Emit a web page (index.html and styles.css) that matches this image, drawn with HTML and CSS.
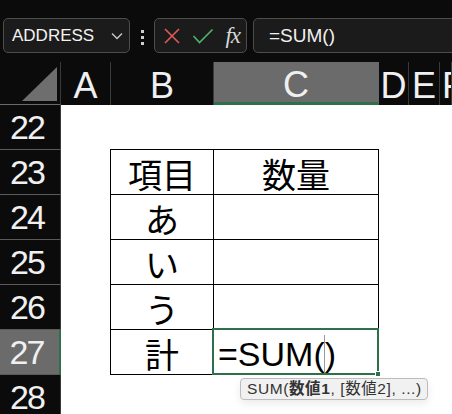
FILE: index.html
```html
<!DOCTYPE html>
<html lang="ja">
<head>
    <meta charset="UTF-8">
    <meta name="viewport" content="width=device-width, initial-scale=1.0">
    <title>sheet</title>
    <link rel="stylesheet" href="styles.css">
</head>
<body>
    <div class="app">
        <div class="toolbar">
            <div class="namebox">
                <span>ADDRESS</span>
                <svg class="chev" width="12" height="8" viewBox="0 0 12 8"><path d="M1 1.5l5 5 5-5" fill="none" stroke="#ccc" stroke-width="1.3"/></svg>
            </div>
            <div class="grip"><i></i><i></i><i></i></div>
            <div class="fbtns">
                <svg width="18" height="18" viewBox="0 0 18 18"><path d="M2 2l14 14M16 2L2 16" stroke="#e05a5a" stroke-width="1.6" fill="none"/></svg>
                <svg width="22" height="16" viewBox="0 0 22 16"><path d="M1.5 8l6 6.5L20.5 1.5" stroke="#4db36a" stroke-width="1.6" fill="none"/></svg>
                <span class="fx">fx</span>
            </div>
            <div class="formula">=SUM()</div>
        </div>

        <div class="sheet">
            <div class="corner"><span></span></div>
            <div class="colhead">A</div>
            <div class="colhead">B</div>
            <div class="colhead sel">C</div>
            <div class="colhead">D</div>
            <div class="colhead">E</div>
            <div class="colhead last">F</div>

            <div class="rowhead r22">22</div>
            <div class="rowhead r23">23</div>
            <div class="rowhead r24">24</div>
            <div class="rowhead r25">25</div>
            <div class="rowhead r26">26</div>
            <div class="rowhead r27 sel">27</div>
            <div class="rowhead r28">28</div>

            <div class="cells"></div>

            <div class="tbl">
                <div class="c">項目</div><div class="c">数量</div>
                <div class="c">あ</div><div class="c"></div>
                <div class="c">い</div><div class="c"></div>
                <div class="c">う</div><div class="c"></div>
                <div class="c">計</div><div class="c active">=SUM(<span class="caret"></span>)<i class="handle"></i></div>
            </div>

            <div class="tip">SUM(<b>数値1</b>, [数値2], ...)</div>
        </div>
    </div>
</body>
</html>
```

FILE: styles.css
```css
*{margin:0;padding:0;box-sizing:border-box;}
body{background:#0b0b0b;font-family:"Liberation Sans","Noto Sans CJK JP",sans-serif;overflow:hidden;}
.app{width:452px;height:414px;overflow:hidden;}

/* top bar */
.toolbar{display:flex;align-items:flex-start;height:62px;padding:18px 0 0 3px;}
.namebox{display:flex;align-items:center;justify-content:space-between;width:127px;height:35px;padding:1px 6px 0 8px;border:1px solid #4d4d4d;border-radius:5px;background:#1b1b1b;color:#f2f2f2;font-size:17px;}
.grip{display:flex;flex-direction:column;gap:3px;margin:12px 10px 0 11px;}
.grip i{display:block;width:3px;height:3px;background:#cfcfcf;}
.fbtns{display:flex;align-items:center;width:93px;height:35px;padding:0 6px 0 8px;border:1px solid #4d4d4d;border-radius:5px;background:#1b1b1b;}
.fbtns svg:nth-child(2){margin-left:11px;}
.fx{margin-left:auto;color:#d8d8d8;font-family:"Liberation Serif",serif;font-style:italic;font-size:23px;letter-spacing:-1px;}
.formula{flex:1;height:35px;margin-left:6px;margin-right:-10px;padding-left:15px;line-height:33px;border:1px solid #4d4d4d;border-radius:5px;background:#1b1b1b;color:#f0f0f0;font-size:19px;}

/* sheet grid */
.sheet{position:relative;display:grid;grid-template-columns:61px 50px 103px 165px 30px 31px 1fr;grid-template-rows:43px repeat(7,45px);}
.corner{grid-column:1;grid-row:1;position:relative;border-right:1px solid #3a3a3a;border-bottom:1px solid #6a6a6a;}
.corner span{position:absolute;left:22px;top:5px;width:35px;height:34px;background:#6e6e6e;clip-path:polygon(100% 0,100% 100%,0 100%);}
.colhead{grid-row:1;display:flex;justify-content:center;align-items:center;padding-top:4px;border-right:1px solid #3a3a3a;color:#f0f0f0;font-size:36px;overflow:hidden;}
.colhead.last{justify-content:flex-start;padding-left:2px;}
.colhead.sel{background:#6b6b6b;border-bottom:3px solid #2e7049;border-right-color:#6b6b6b;padding-top:6px;}
.rowhead{grid-column:1;display:flex;justify-content:center;align-items:center;padding-right:6px;border-bottom:1px solid #5a5a5a;border-right:1px solid #3a3a3a;color:#f0f0f0;font-size:34px;letter-spacing:-2px;}
.rowhead.sel{background:#6b6b6b;border-right:2px solid #2e7049;}
.r22{grid-row:2;}.r23{grid-row:3;}.r24{grid-row:4;}.r25{grid-row:5;}.r26{grid-row:6;}.r27{grid-row:7;}.r28{grid-row:8;}
.cells{grid-column:2/-1;grid-row:2/-1;background:#fff;}

/* bordered range B23:C27 */
.tbl{grid-column:3/5;grid-row:3/8;align-self:start;display:grid;grid-template-columns:103px 165px;grid-template-rows:repeat(5,45px);margin-top:-1px;border-top:1px solid #000;border-left:1px solid #000;margin-left:-1px;width:269px;}
.tbl .c{position:relative;display:flex;justify-content:center;align-items:center;padding-top:4px;border-right:1px solid #000;border-bottom:1px solid #000;color:#000;font-family:"Noto Sans CJK JP",sans-serif;font-size:34px;line-height:1;}
.tbl .active{justify-content:flex-start;padding-left:4px;font-family:"Liberation Sans",sans-serif;font-size:34px;}
.tbl .active::after{content:"";position:absolute;top:-2px;left:-2px;right:-1px;bottom:-1px;border:2px solid #2e7049;}
.caret{display:inline-block;width:1px;height:39px;margin:0 0 0 -1px;background:#9a9a9a;}
.handle{position:absolute;right:-3px;bottom:-3px;width:6px;height:6px;background:#2e7049;border:1px solid #fff;z-index:2;}

/* function hint */
.tip{position:absolute;left:240px;top:316px;height:22px;padding:0 5px 0 6px;line-height:20px;border:1px solid #bcbcbc;border-radius:4px;background:#f1f1f1;color:#333;font-size:15.5px;letter-spacing:.6px;box-shadow:0 4px 8px rgba(0,0,0,.08);}
.tip b{font-weight:bold;}
```
